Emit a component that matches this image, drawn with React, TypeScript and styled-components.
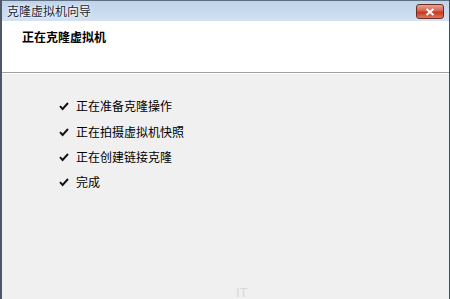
import React from 'react';
import styled, { createGlobalStyle } from 'styled-components';

const GlobalStyle = createGlobalStyle`
  html, body {
    margin: 0;
    padding: 0;
    background: #f0f0f0;
  }
`;

const St = {
  Window: styled.div`
    width: 450px;
    height: 299px;
    display: flex;
    flex-direction: column;
    overflow: hidden;
    box-sizing: border-box;
    border-left: 2px solid #4c5866;
    border-right: 1px solid #3e4c5c;
    box-shadow: inset -4px 0 0 #a9c5e3;
    font-family: 'Noto Sans CJK SC', 'Noto Sans', sans-serif;
    font-size: 12px;
    color: #000;
  `,
  TitleBar: styled.div`
    height: 21px;
    flex: none;
    display: flex;
    align-items: center;
    justify-content: space-between;
    padding: 0 5px 0 5px;
    background: linear-gradient(#bfd3ea, #c9dbef 60%, #d3e2f2);
    border-top: 1px solid #5e6f82;
    box-sizing: border-box;
  `,
  TitleText: styled.div`
    font-size: 12px;
    color: #1b2633;
    line-height: 16px;
    text-shadow: 0 0 4px #ffffff, 0 0 2px #ffffff;
  `,
  CloseButton: styled.div`
    width: 28px;
    height: 15px;
    margin-top: 1px;
    border: 1px solid #6b2d24;
    border-radius: 3px;
    background: linear-gradient(#e7a395, #d6644e 45%, #c33a1f 55%, #d9785f);
    display: flex;
    align-items: center;
    justify-content: center;
    box-sizing: border-box;
  `,
  Header: styled.div`
    height: 52px;
    flex: none;
    background: #fff;
    padding: 8px 0 0 20px;
    box-sizing: border-box;
    border-bottom: 1px solid #a0a0a0;
    box-shadow: 0 1px 0 #ffffff;
  `,
  HeaderTitle: styled.div`
    font-weight: bold;
    font-size: 12px;
    line-height: 16px;
  `,
  Body: styled.div`
    flex: 1;
    background: #f0f0f0;
    margin-top: 1px;
    padding: 23px 0 0 57px;
    display: flex;
    flex-direction: column;
    gap: 7px;
    position: relative;
  `,
  StepRow: styled.div`
    display: flex;
    align-items: center;
    gap: 7px;
    height: 18.4px;
    line-height: 18px;
  `,
  Watermark: styled.div`
    position: absolute;
    left: 234px;
    bottom: 0;
    font-family: 'Liberation Sans', sans-serif;
    font-size: 13px;
    line-height: 13px;
    color: #d8d8d8;
  `,
};

const Check: React.FC = () => (
  <svg width="10" height="10" viewBox="0 0 10 10">
    <path d="M1 5.2 L3.6 8 L9 2" fill="none" stroke="#111" strokeWidth="1.9" />
  </svg>
);

const CloseGlyph: React.FC = () => (
  <svg width="10" height="8" viewBox="0 0 10 8">
    <path d="M1.5 1 L8.5 7 M8.5 1 L1.5 7" stroke="#fff" strokeWidth="2" />
  </svg>
);

const steps = ['正在准备克隆操作', '正在拍摄虚拟机快照', '正在创建链接克隆', '完成'];

const App: React.FC = () => {
  return (
    <>
      <GlobalStyle />
      <St.Window>
        <St.TitleBar>
          <St.TitleText>克隆虚拟机向导</St.TitleText>
          <St.CloseButton>
            <CloseGlyph />
          </St.CloseButton>
        </St.TitleBar>
        <St.Header>
          <St.HeaderTitle>正在克隆虚拟机</St.HeaderTitle>
        </St.Header>
        <St.Body>
          {steps.map((s) => (
            <St.StepRow key={s}>
              <Check />
              <span>{s}</span>
            </St.StepRow>
          ))}
          <St.Watermark>IT</St.Watermark>
        </St.Body>
      </St.Window>
    </>
  );
};

export default App;
